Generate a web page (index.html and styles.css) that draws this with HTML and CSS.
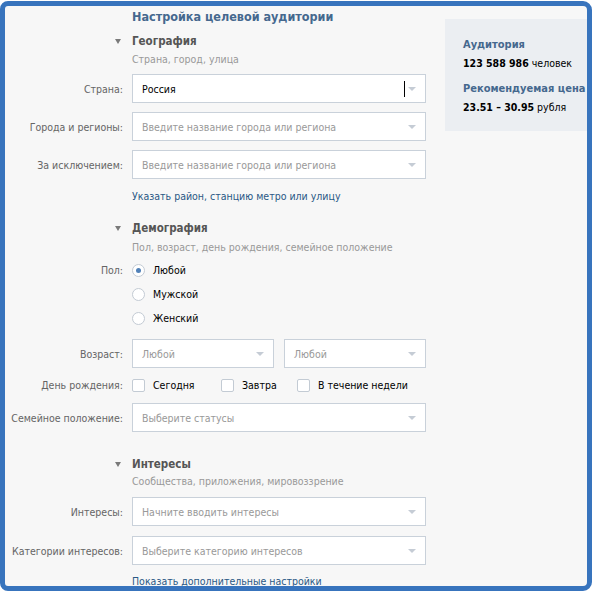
FILE: index.html
```html
<!DOCTYPE html>
<html lang="ru">
<head>
<meta charset="utf-8">
<title>Настройка целевой аудитории</title>
<link rel="stylesheet" href="styles.css">
</head>
<body>
<div class="frame">
  <div class="layout">
    <div class="main">
      <div class="title-row"><h1 class="title">Настройка целевой аудитории</h1></div>

      <section class="sec sec-geo">
        <div class="sec-head"><span class="tri-cell"><span class="tri"></span></span><h2>География</h2></div>
        <div class="sec-sub"><span></span><p>Страна, город, улица</p></div>
        <div class="rows">
          <div class="row"><label class="lbl">Страна:</label>
            <div class="select"><span class="val">Россия</span><span class="cursor"></span><span class="arrow"></span></div></div>
          <div class="row"><label class="lbl">Города и регионы:</label>
            <div class="select"><span class="ph">Введите название города или региона</span><span class="arrow"></span></div></div>
          <div class="row"><label class="lbl">За исключением:</label>
            <div class="select"><span class="ph">Введите название города или региона</span><span class="arrow"></span></div></div>
        </div>
        <div class="link-row"><span></span><a class="link">Указать район, станцию метро или улицу</a></div>
      </section>

      <section class="sec sec-demo">
        <div class="sec-head"><span class="tri-cell"><span class="tri"></span></span><h2>Демография</h2></div>
        <div class="sec-sub"><span></span><p>Пол, возраст, день рождения, семейное положение</p></div>
        <div class="radio-block">
          <label class="lbl">Пол:</label>
          <div class="radios">
            <div class="radio on"><span class="circle"></span><span>Любой</span></div>
            <div class="radio"><span class="circle"></span><span>Мужской</span></div>
            <div class="radio"><span class="circle"></span><span>Женский</span></div>
          </div>
        </div>
        <div class="row row-age"><label class="lbl">Возраст:</label>
          <div class="pair">
            <div class="select"><span class="ph">Любой</span><span class="arrow"></span></div>
            <div class="select"><span class="ph">Любой</span><span class="arrow"></span></div>
          </div>
        </div>
        <div class="row row-bday"><label class="lbl">День рождения:</label>
          <div class="checks">
            <div class="check c1"><span class="box"></span><span>Сегодня</span></div>
            <div class="check c2"><span class="box"></span><span>Завтра</span></div>
            <div class="check"><span class="box"></span><span>В течение недели</span></div>
          </div>
        </div>
        <div class="row row-fam"><label class="lbl">Семейное положение:</label>
          <div class="select"><span class="ph">Выберите статусы</span><span class="arrow"></span></div></div>
      </section>

      <section class="sec sec-int">
        <div class="sec-head"><span class="tri-cell"><span class="tri"></span></span><h2>Интересы</h2></div>
        <div class="sec-sub"><span></span><p>Сообщества, приложения, мировоззрение</p></div>
        <div class="rows rows-int">
          <div class="row"><label class="lbl">Интересы:</label>
            <div class="select"><span class="ph">Начните вводить интересы</span><span class="arrow"></span></div></div>
          <div class="row"><label class="lbl">Категории интересов:</label>
            <div class="select"><span class="ph">Выберите категорию интересов</span><span class="arrow"></span></div></div>
        </div>
        <div class="link-row link-more"><span></span><a class="link">Показать дополнительные настройки</a></div>
      </section>
    </div>

    <aside class="panel">
      <div class="stat">
        <div class="stat-title">Аудитория</div>
        <div class="stat-val"><b>123 588 986</b> человек</div>
      </div>
      <div class="stat">
        <div class="stat-title">Рекомендуемая цена</div>
        <div class="stat-val"><b>23.51 – 30.95</b> рубля</div>
      </div>
    </aside>
  </div>
</div>
</body>
</html>
```

FILE: styles.css
```css
* { box-sizing: border-box; }
html, body { margin: 0; padding: 0; background: #ffffff; }
body {
  width: 592px;
  height: 593px;
  overflow: hidden;
  font-family: "DejaVu Sans Condensed", "DejaVu Sans", sans-serif;
  font-stretch: condensed;
  font-size: 10.5px;
  color: #000;
}
.frame {
  margin-top: 1px;
  width: 592px;
  height: 590px;
  border: 5px solid #3874bd;
  border-radius: 8px 9px 9px 8px;
  background: #f7f7f7;
  overflow: hidden;
}
.layout {
  display: flex;
  align-items: flex-start;
}
.main {
  width: 440px;
  flex: none;
}
.title-row {
  display: grid;
  grid-template-columns: 118px 1fr;
  column-gap: 9px;
  padding-top: 2px;
}
.title {
  grid-column: 2;
  margin: 0;
  font-size: 12.5px;
  line-height: 18px;
  font-weight: bold;
  color: #45688e;
  white-space: nowrap;
}
.sec-head, .sec-sub, .link-row, .row, .radio-block {
  display: grid;
  grid-template-columns: 118px 294px;
  column-gap: 9px;
  align-items: center;
}
.sec-head { margin-top: 6px; height: 18px; }
.sec-geo .sec-sub { padding-top: 1px; }
.sec-demo .sec-head { margin-top: 15px; }
.sec-demo .sec-sub { padding-top: 2px; }
.sec-int .sec-head { margin-top: 23px; }
.tri-cell { display: flex; justify-content: flex-end; padding-right: 2px; }
.tri {
  width: 0; height: 0;
  border-left: 3px solid transparent;
  border-right: 3px solid transparent;
  border-top: 5px solid #7a7a7a;
}
.sec-head h2 {
  margin: 0;
  font-size: 11.5px;
  line-height: 18px;
  font-weight: bold;
  color: #555;
}
.sec-sub p {
  margin: 0;
  font-size: 10.5px;
  line-height: 16px;
  color: #999;
  white-space: nowrap;
}
.rows { display: flex; flex-direction: column; gap: 9px; margin-top: 7px; }
.rows-int { margin-top: 8px; gap: 10px; }
.lbl {
  text-align: right;
  color: #656565;
  font-size: 10.5px;
  line-height: 16px;
  white-space: nowrap;
}
.select {
  position: relative;
  height: 29px;
  border: 1px solid #c9d1da;
  background: #fff;
  display: flex;
  align-items: center;
  padding: 0 26px 0 9px;
  white-space: nowrap;
  overflow: hidden;
}
.val { color: #000; }
.ph { color: #999; }
.arrow {
  position: absolute;
  right: 9px;
  top: 12px;
  width: 0; height: 0;
  border-left: 4px solid transparent;
  border-right: 4px solid transparent;
  border-top: 4px solid #c5ccd5;
}
.cursor {
  position: absolute;
  right: 20px;
  top: 6px;
  width: 1px;
  height: 16px;
  background: #000;
}
.link-row { margin-top: 9px; }
.link {
  color: #2a5885;
  font-size: 10.5px;
  line-height: 16px;
  cursor: pointer;
  white-space: nowrap;
}
.link-more { margin-top: 8px; }

.radio-block { align-items: start; margin-top: 3px; }
.radio-block .lbl { line-height: 24px; }
.radios { display: flex; flex-direction: column; }
.radio {
  display: flex;
  align-items: center;
  gap: 8px;
  height: 24px;
}
.circle {
  width: 13px; height: 13px;
  border-radius: 50%;
  border: 1px solid #c3cbd4;
  background: #fff;
  display: flex; align-items: center; justify-content: center;
  flex: none;
}
.radio.on .circle::after {
  content: "";
  width: 5px; height: 5px;
  border-radius: 50%;
  background: #5181b8;
}
.row-age { margin-top: 9px; }
.pair { display: grid; grid-template-columns: 142px 142px; column-gap: 10px; }
.row-bday { margin-top: 5px; height: 24px; }
.checks { display: flex; align-items: center; }
.check { display: flex; align-items: center; gap: 8px; white-space: nowrap; }
.check.c1 { width: 89px; }
.check.c2 { width: 76px; }
.box {
  width: 13px; height: 13px;
  border: 1px solid #c3cbd4;
  border-radius: 2px;
  background: #fff;
  flex: none;
}
.row-fam { margin-top: 6px; }

.panel {
  flex: 1;
  margin-top: 13px;
  height: 112px;
  background: #ebeef2;
  padding: 17px 0 0 18px;
  white-space: nowrap;
}
.stat { margin-bottom: 8px; }
.stat-title {
  color: #45688e;
  font-weight: bold;
  font-size: 11px;
  line-height: 18px;
}
.stat-val {
  font-size: 10.5px;
  line-height: 18px;
  color: #000;
}
.stat-val b { font-weight: bold; }
```
